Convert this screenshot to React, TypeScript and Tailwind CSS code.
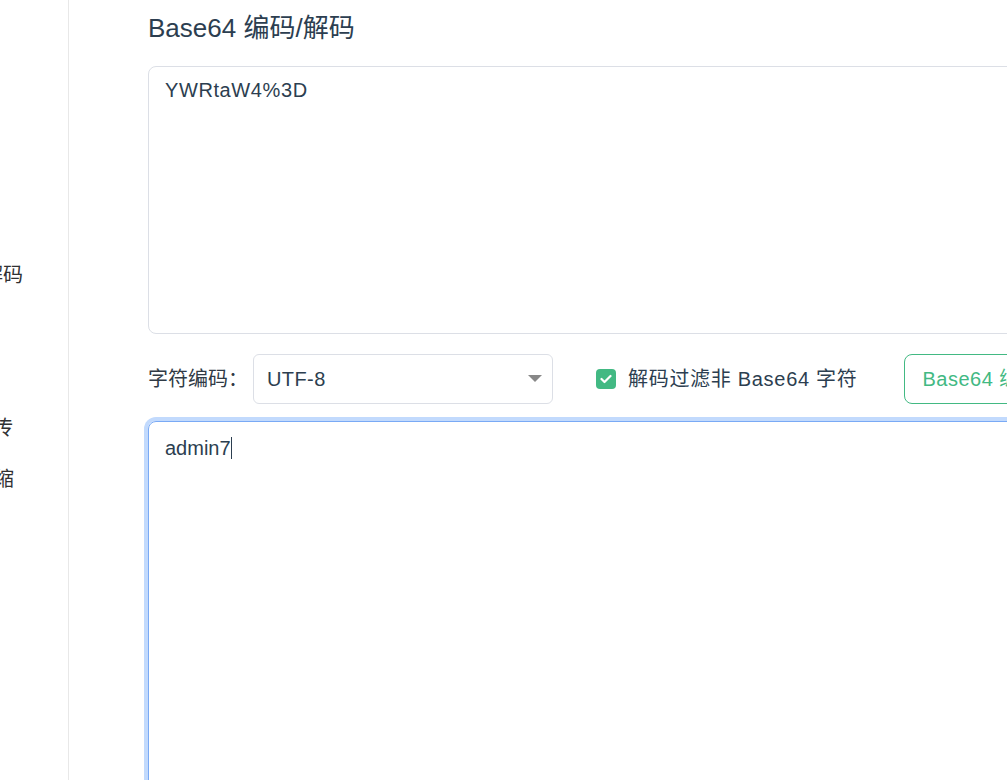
import React from 'react';

const font = { fontFamily: '"Liberation Sans", "Noto Sans CJK SC", sans-serif' };

// 左側メニュー（画面外にはみ出した状態）
const menuItems = [
  { label: 'URL 编码/解码', pr: 'pr-[140px]', active: false },
  { label: 'JSON 格式化', pr: 'pr-[140px]', active: true },
  { label: 'Unicode 编码', pr: 'pr-[140px]', active: false },
  { label: 'Base64 编码/解码', pr: 'pr-[45px]', active: false },
  { label: 'MD5 加密', pr: 'pr-[140px]', active: false },
  { label: '时间戳转换', pr: 'pr-[140px]', active: false },
  { label: '图片转 Base64 上传', pr: 'pr-[55px]', active: false },
  { label: 'CSS 压缩', pr: 'pr-[54px]', active: false },
];

function Sidebar() {
  return (
    <div className="w-[69px] shrink-0 h-full border-r border-[#e8e8e8] overflow-hidden">
      <div className="pt-[96px] flex flex-col">
        {menuItems.map((item) => (
          <div
            key={item.label}
            className={`relative h-[51px] flex items-center justify-end whitespace-nowrap text-[20px] text-[#303133] ${item.pr}`}
          >
            {item.label}
            {item.active && (
              <span className="absolute right-[7px] top-[4px] w-[3px] h-[42px] bg-[#42b983]" />
            )}
          </div>
        ))}
      </div>
    </div>
  );
}

function Caret() {
  return <span className="inline-block w-px h-[22px] bg-[#2c3e50] align-[-4px]" />;
}

export default function App() {
  return (
    <div className="w-[1007px] h-[780px] overflow-hidden flex bg-white text-[#2c3e50]" style={font}>
      <Sidebar />
      <div className="flex-1 min-w-0 pl-[79px] pt-[12px]">
        <div className="w-[1000px]">
          <h1 className="text-[26px] leading-[32px] font-normal">Base64 编码/解码</h1>

          {/* 入力エリア */}
          <div className="mt-[22px] h-[268px] border border-[#dcdfe6] rounded-[8px] px-[16px] pt-[10px] text-[20px] leading-[26px] tracking-[0.6px]">
            YWRtaW4%3D
          </div>

          {/* 設定行 */}
          <div className="mt-[20px] flex items-center h-[50px]">
            <span className="text-[20px] text-[#303a45] w-[105px]">字符编码：</span>
            <div className="w-[300px] h-[50px] border border-[#dcdfe6] rounded-[6px] flex items-center justify-between pl-[13px] pr-[10px] text-[20px]">
              <span className="tracking-[0.4px]">UTF-8</span>
              <svg width="14" height="8" viewBox="0 0 14 8">
                <path d="M0 0 H14 L7 7 Z" fill="#888" />
              </svg>
            </div>
            <label className="ml-[43px] flex items-center gap-[12px] text-[20px] tracking-[0.7px]">
              <span className="w-[20px] h-[20px] rounded-[4px] bg-[#42b983] flex items-center justify-center">
                <svg width="12" height="10" viewBox="0 0 12 10">
                  <path d="M1.5 5 L4.5 8 L10.5 2" stroke="white" strokeWidth="2.2" fill="none" strokeLinecap="round" strokeLinejoin="round" />
                </svg>
              </span>
              解码过滤非 Base64 字符
            </label>
            <button className="ml-[47px] h-[50px] px-[17px] border border-[#42b983] rounded-[8px] text-[20px] text-[#42b983] whitespace-nowrap bg-white tracking-[0.5px]">
              Base64 编码
            </button>
          </div>

          {/* 出力エリア（フォーカス状態） */}
          <div className="mt-[17px] h-[400px] border border-[#7aaaf5] rounded-[8px] ring-4 ring-[#c2dafd] px-[16px] pt-[13px] text-[20px] leading-[26px]">
            admin7
            <Caret />
          </div>
        </div>
      </div>
    </div>
  );
}
